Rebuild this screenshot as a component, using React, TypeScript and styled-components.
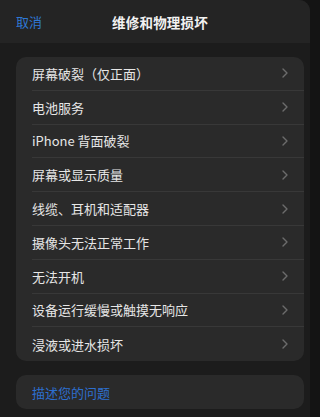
import styled, { createGlobalStyle } from "styled-components";

const GlobalStyle = createGlobalStyle`
  html, body {
    margin: 0;
    padding: 0;
    background: #141414;
  }
  body {
    font-family: "Noto Sans CJK SC", "Noto Sans", sans-serif;
    -webkit-font-smoothing: antialiased;
  }
`;

const Sheet = styled.div`
  width: 310px;
  height: 417px;
  background: #1c1c1c;
  border-top-right-radius: 11px;
  overflow: hidden;
`;

const Header = styled.div`
  height: 43px;
  background: #242424;
  display: grid;
  grid-template-columns: 70px 1fr 60px;
  align-items: center;
`;

const Cancel = styled.span`
  color: #2f78d4;
  font-size: 13px;
  padding-left: 16px;
`;

const Title = styled.span`
  color: #f2f2f2;
  font-size: 13.5px;
  font-weight: 600;
  text-align: center;
  letter-spacing: 0.2px;
`;

const Content = styled.div`
  padding: 14px 6px 0 16px;
  display: flex;
  flex-direction: column;
  gap: 14px;
`;

const Card = styled.div`
  background: #2a2a2a;
  border-radius: 10px;
  overflow: hidden;
`;

const Row = styled.div<{ $last?: boolean }>`
  height: 33.8px;
  margin-left: 16px;
  padding-right: 16px;
  display: flex;
  align-items: center;
  justify-content: space-between;
  border-bottom: ${(p) => (p.$last ? "none" : "1px solid #383838")};
  box-sizing: border-box;
`;

const Label = styled.span<{ $blue?: boolean }>`
  color: ${(p) => (p.$blue ? "#2d6fcf" : "#e6e6e6")};
  font-size: 13px;
`;

const Chevron = () => (
  <svg width="6" height="10" viewBox="0 0 6 10">
    <path d="M1 1l4 4-4 4" stroke="#6c6c6c" strokeWidth="1.4" fill="none" strokeLinecap="round" strokeLinejoin="round" />
  </svg>
);

const items = [
  "屏幕破裂（仅正面）",
  "电池服务",
  "iPhone 背面破裂",
  "屏幕或显示质量",
  "线缆、耳机和适配器",
  "摄像头无法正常工作",
  "无法开机",
  "设备运行缓慢或触摸无响应",
  "浸液或进水损坏",
];

export default function App() {
  return (
    <>
      <GlobalStyle />
      <Sheet>
        <Header>
          <Cancel>取消</Cancel>
          <Title>维修和物理损坏</Title>
          <span />
        </Header>
        <Content>
          <Card>
            {items.map((t, i) => (
              <Row key={t} $last={i === items.length - 1}>
                <Label>{t}</Label>
                <Chevron />
              </Row>
            ))}
          </Card>
          <Card>
            <Row $last>
              <Label $blue>描述您的问题</Label>
            </Row>
          </Card>
        </Content>
      </Sheet>
    </>
  );
}
